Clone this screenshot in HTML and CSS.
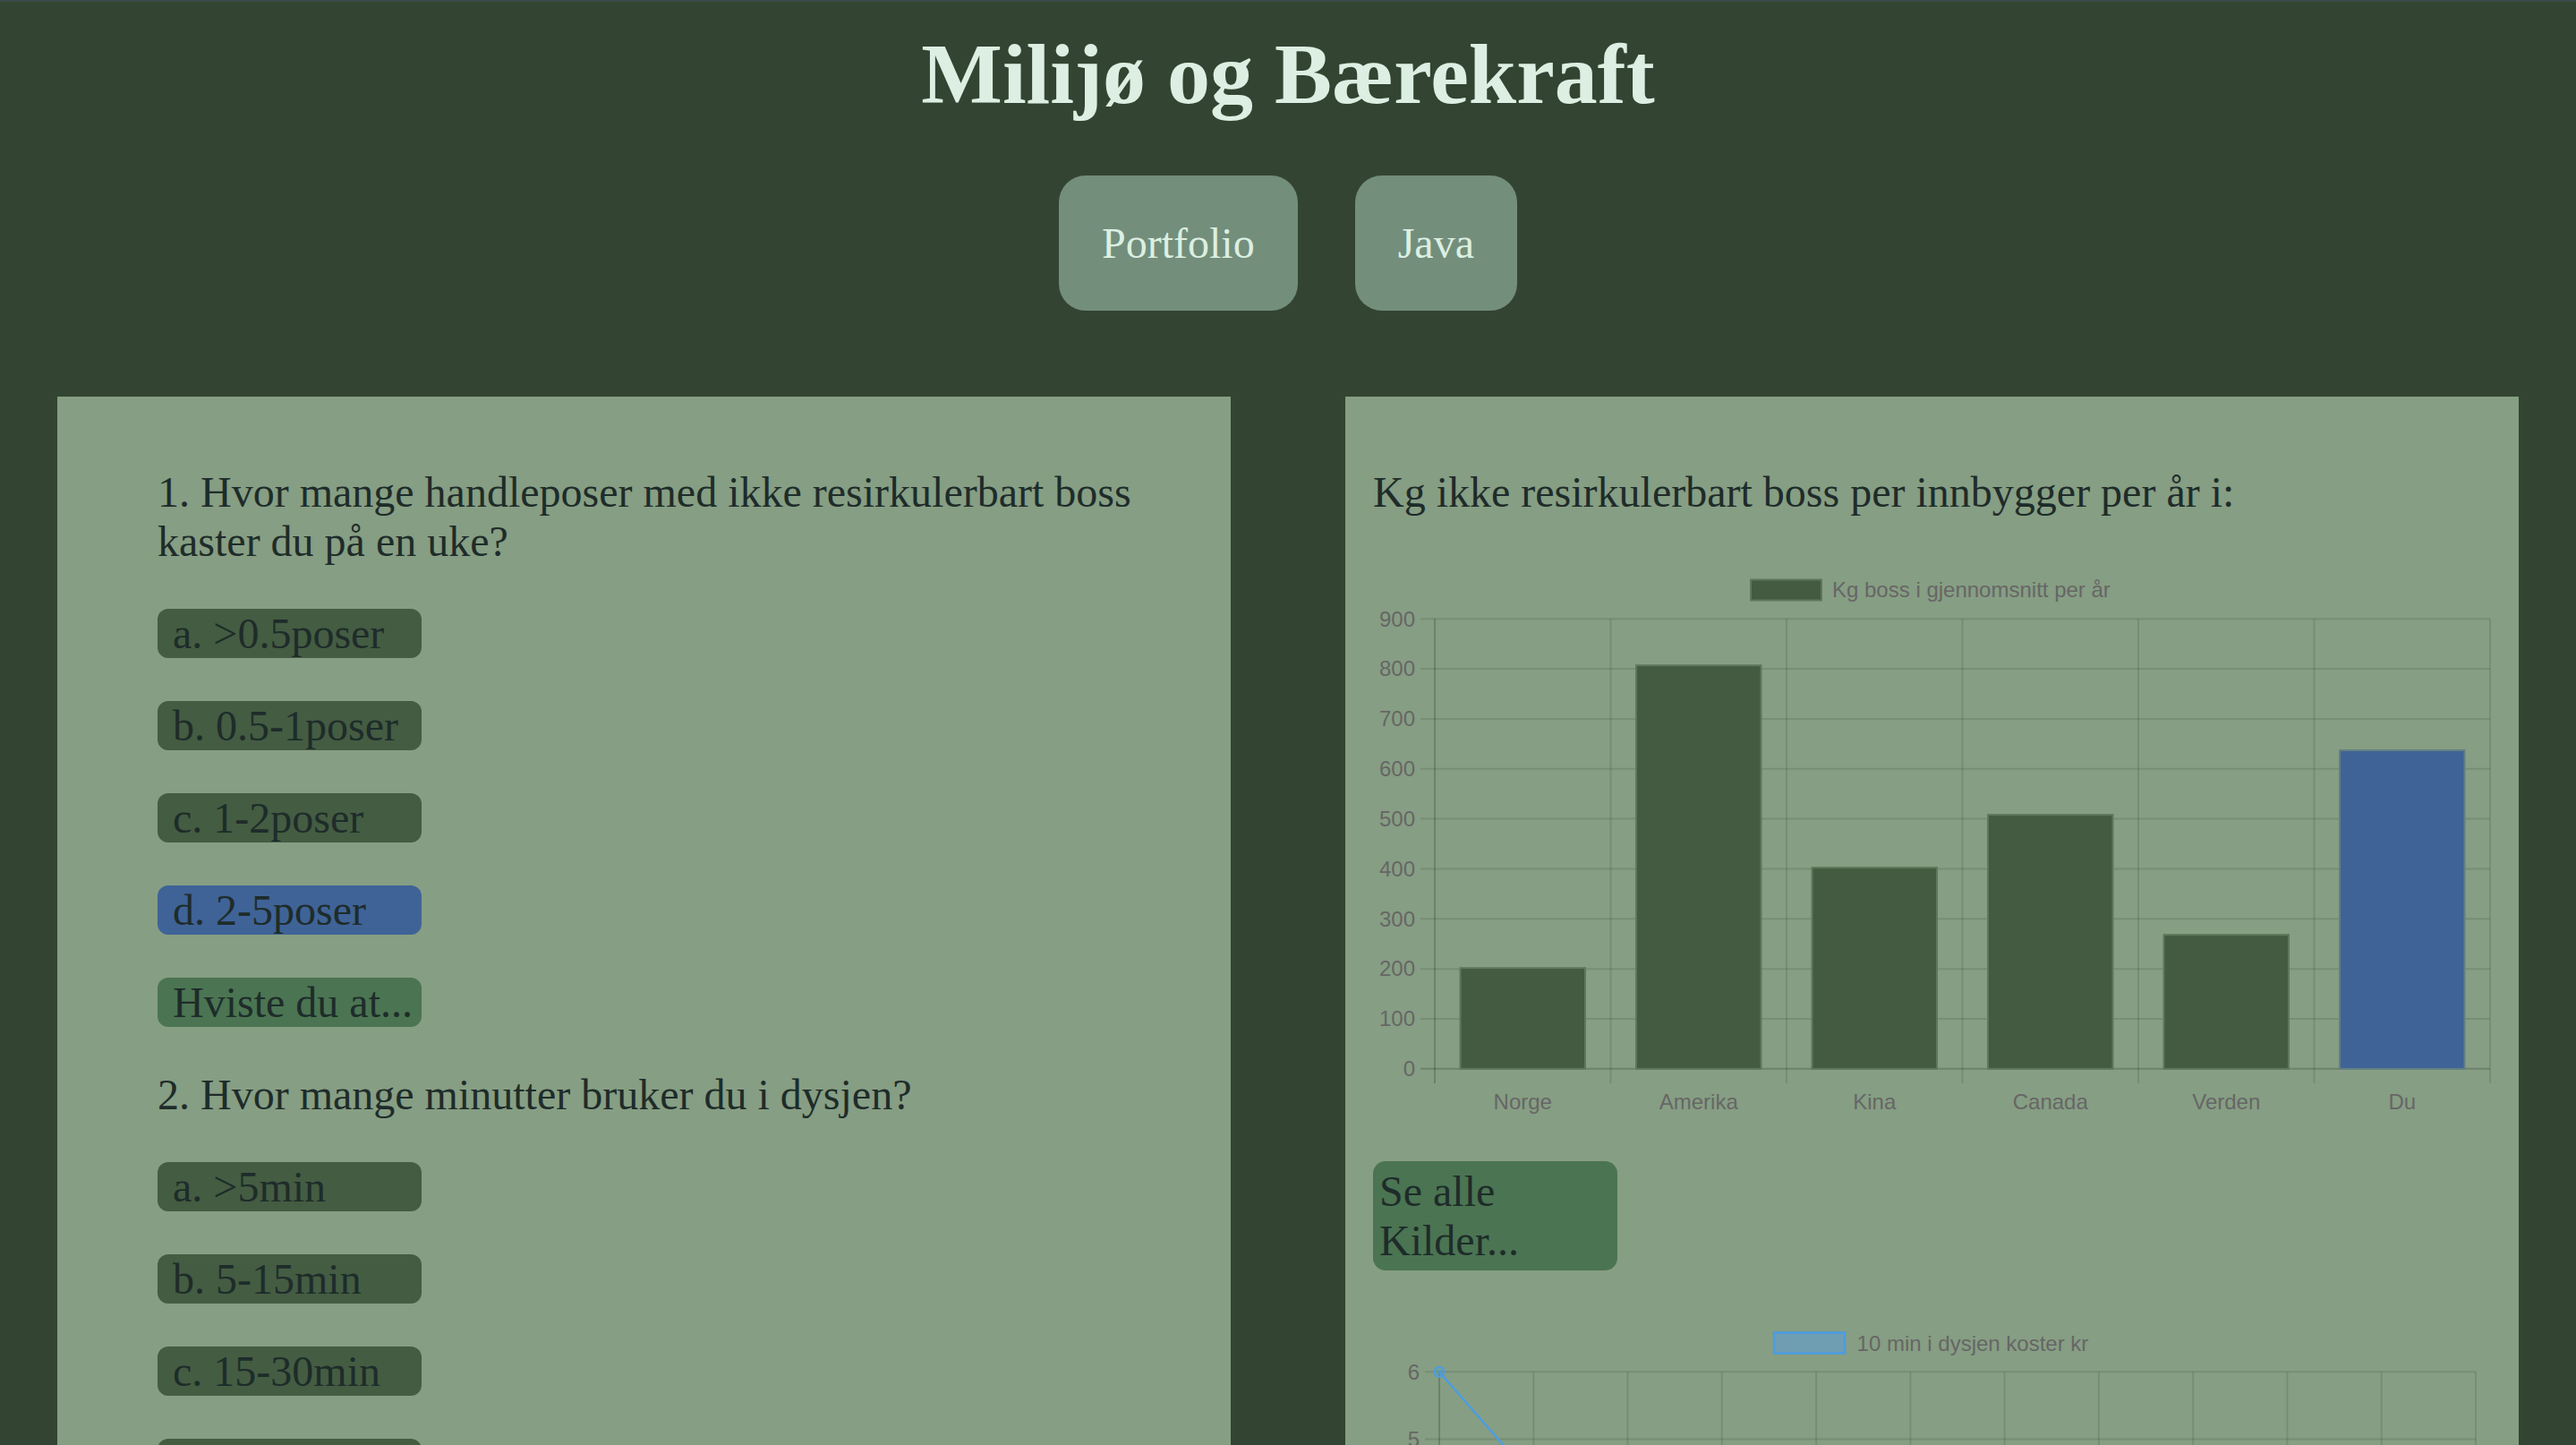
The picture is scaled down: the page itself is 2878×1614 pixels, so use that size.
FILE: index.html
```html
<!DOCTYPE html>
<html lang="no">
<head>
<meta charset="utf-8">
<title>Milijø og Bærekraft</title>
<link rel="stylesheet" href="styles.css">
</head>
<body>
<header class="header">
  <h1 class="title">Milijø og Bærekraft</h1>
  <nav class="nav">
    <a class="nav-btn" href="#">Portfolio</a>
    <a class="nav-btn" href="#">Java</a>
  </nav>
</header>
<main class="panels">
  <section class="panel panel-quiz">
    <div class="quiz">
      <p class="question">1. Hvor mange handleposer med ikke resirkulerbart boss kaster du på en uke?</p>
      <div class="opt">a. &gt;0.5poser</div>
      <div class="opt">b. 0.5-1poser</div>
      <div class="opt">c. 1-2poser</div>
      <div class="opt opt-selected">d. 2-5poser</div>
      <div class="opt opt-info">Hviste du at...</div>
      <p class="question">2. Hvor mange minutter bruker du i dysjen?</p>
      <div class="opt">a. &gt;5min</div>
      <div class="opt">b. 5-15min</div>
      <div class="opt">c. 15-30min</div>
      <div class="opt">d. 30min+</div>
      <div class="opt opt-info">Hviste du at...</div>
    </div>
  </section>
  <section class="panel panel-charts">
    <p class="question">Kg ikke resirkulerbart boss per innbygger per år i:</p>
    <svg class="chart" width="1249" height="624" viewBox="0 0 1249 624">
      <rect x="422" y="22.5" width="79" height="23" fill="#445b41" stroke="#5f775c" stroke-width="2"/>
      <text class="chart-text" x="513" y="42">Kg boss i gjennomsnitt per år</text>
      <g stroke="rgba(0,0,0,0.1)" stroke-width="2">
        <line x1="53" y1="66.2" x2="1248" y2="66.2"/>
        <line x1="53" y1="122.05" x2="1248" y2="122.05"/>
        <line x1="53" y1="177.9" x2="1248" y2="177.9"/>
        <line x1="53" y1="233.75" x2="1248" y2="233.75"/>
        <line x1="53" y1="289.6" x2="1248" y2="289.6"/>
        <line x1="53" y1="345.45" x2="1248" y2="345.45"/>
        <line x1="53" y1="401.3" x2="1248" y2="401.3"/>
        <line x1="53" y1="457.15" x2="1248" y2="457.15"/>
        <line x1="53" y1="513" x2="1248" y2="513"/>
        <line x1="265.5" y1="66.2" x2="265.5" y2="585"/>
        <line x1="462" y1="66.2" x2="462" y2="585"/>
        <line x1="658.5" y1="66.2" x2="658.5" y2="585"/>
        <line x1="855" y1="66.2" x2="855" y2="585"/>
        <line x1="1051.5" y1="66.2" x2="1051.5" y2="585"/>
        <line x1="1248" y1="66.2" x2="1248" y2="585"/>
      </g>
      <g stroke="rgba(0,0,0,0.18)" stroke-width="2">
        <line x1="53" y1="568.85" x2="1248" y2="568.85"/>
        <line x1="69" y1="66.2" x2="69" y2="585"/>
      </g>
      <g class="chart-text" text-anchor="end">
        <text x="47" y="74.5">900</text>
        <text x="47" y="130.3">800</text>
        <text x="47" y="186.2">700</text>
        <text x="47" y="242">600</text>
        <text x="47" y="297.9">500</text>
        <text x="47" y="353.7">400</text>
        <text x="47" y="409.6">300</text>
        <text x="47" y="465.4">200</text>
        <text x="47" y="521.3">100</text>
        <text x="47" y="577.1">0</text>
      </g>
      <g stroke-width="2">
        <rect x="97.5" y="456.2" width="139.5" height="112.65" fill="#445b41" stroke="#5f775c"/>
        <rect x="294" y="118.2" width="139.5" height="450.65" fill="#445b41" stroke="#5f775c"/>
        <rect x="490.5" y="344.1" width="139.5" height="224.75" fill="#445b41" stroke="#5f775c"/>
        <rect x="687" y="285.1" width="139.5" height="283.75" fill="#445b41" stroke="#5f775c"/>
        <rect x="883.5" y="419.1" width="139.5" height="149.75" fill="#445b41" stroke="#5f775c"/>
        <rect x="1080" y="213.1" width="139.5" height="355.75" fill="#3f6397" stroke="#627f86"/>
      </g>
      <g class="chart-text" text-anchor="middle">
        <text x="167.25" y="613.5">Norge</text>
        <text x="363.75" y="613.5">Amerika</text>
        <text x="560.25" y="613.5">Kina</text>
        <text x="756.75" y="613.5">Canada</text>
        <text x="953.25" y="613.5">Verden</text>
        <text x="1149.75" y="613.5">Du</text>
      </g>
    </svg>
    <a class="sources-btn" href="#">Se alle Kilder...</a>
    <svg class="chart" width="1249" height="624" viewBox="0 0 1249 624">
      <rect x="448" y="21.5" width="79" height="23" fill="#6f9db1" stroke="#4b9ce2" stroke-width="2.5"/>
      <text class="chart-text" x="540.6" y="42">10 min i dysjen koster kr</text>
      <g stroke="rgba(0,0,0,0.1)" stroke-width="2">
        <line x1="58" y1="65.3" x2="1232" y2="65.3"/>
        <line x1="58" y1="140.6" x2="1232" y2="140.6"/>
        <line x1="58" y1="215.9" x2="1232" y2="215.9"/>
        <line x1="58" y1="291.2" x2="1232" y2="291.2"/>
        <line x1="58" y1="366.5" x2="1232" y2="366.5"/>
        <line x1="58" y1="441.8" x2="1232" y2="441.8"/>
        <line x1="179.3" y1="65.3" x2="179.3" y2="533"/>
        <line x1="284.5" y1="65.3" x2="284.5" y2="533"/>
        <line x1="389.8" y1="65.3" x2="389.8" y2="533"/>
        <line x1="495.1" y1="65.3" x2="495.1" y2="533"/>
        <line x1="600.4" y1="65.3" x2="600.4" y2="533"/>
        <line x1="705.6" y1="65.3" x2="705.6" y2="533"/>
        <line x1="810.9" y1="65.3" x2="810.9" y2="533"/>
        <line x1="916.2" y1="65.3" x2="916.2" y2="533"/>
        <line x1="1021.4" y1="65.3" x2="1021.4" y2="533"/>
        <line x1="1126.7" y1="65.3" x2="1126.7" y2="533"/>
        <line x1="1232" y1="65.3" x2="1232" y2="533"/>
      </g>
      <g stroke="rgba(0,0,0,0.18)" stroke-width="2">
        <line x1="58" y1="517.1" x2="1232" y2="517.1"/>
        <line x1="74" y1="65.3" x2="74" y2="533"/>
      </g>
      <g class="chart-text" text-anchor="end">
        <text x="52" y="73.8">6</text>
        <text x="52" y="149.1">5</text>
        <text x="52" y="224.4">4</text>
        <text x="52" y="299.7">3</text>
        <text x="52" y="375">2</text>
        <text x="52" y="450.3">1</text>
        <text x="52" y="525.6">0</text>
      </g>
      <polyline fill="none" stroke="#4d9de0" stroke-width="2.5" points="74,65.3 179.3,185.8 284.5,261.1 389.8,291.2 495.1,336.4 600.4,366.5 705.6,381.6 810.9,396.6 916.2,411.7 1021.4,419.2 1126.7,426.8 1232,434.3"/>
      <g fill="rgba(54,162,235,0.3)" stroke="#4d9de0" stroke-width="2">
        <circle cx="74" cy="65.3" r="5.5"/>
        <circle cx="179.3" cy="185.8" r="5.5"/>
        <circle cx="284.5" cy="261.1" r="5.5"/>
        <circle cx="389.8" cy="291.2" r="5.5"/>
        <circle cx="495.1" cy="336.4" r="5.5"/>
        <circle cx="600.4" cy="366.5" r="5.5"/>
        <circle cx="705.6" cy="381.6" r="5.5"/>
        <circle cx="810.9" cy="396.6" r="5.5"/>
        <circle cx="916.2" cy="411.7" r="5.5"/>
        <circle cx="1021.4" cy="419.2" r="5.5"/>
        <circle cx="1126.7" cy="426.8" r="5.5"/>
        <circle cx="1232" cy="434.3" r="5.5"/>
      </g>
    </svg>
  </section>
</main>
</body>
</html>
```

FILE: styles.css
```css
html {
  background: #334532;
}
body {
  margin: 0;
  border-top: 2px solid #3a4a4a;
  background: #334532;
  font-family: "Liberation Serif", "Times New Roman", serif;
  color: #1e2c2a;
}
.header {
  display: flex;
  flex-direction: column;
  align-items: center;
  padding-top: 26px;
}
.title {
  margin: 0;
  font-size: 96px;
  line-height: 110px;
  font-weight: bold;
  color: #dcefe2;
}
.nav {
  display: flex;
  gap: 64px;
  margin-top: 58px;
}
.nav-btn {
  display: block;
  padding: 48px;
  font-size: 48px;
  line-height: 55px;
  color: #dcefe2;
  background: #738e7b;
  border-radius: 30px;
  text-decoration: none;
}
.panels {
  display: flex;
  justify-content: space-around;
  align-items: flex-start;
  margin-top: 96px;
}
.panel {
  box-sizing: border-box;
  width: 1311px;
  background: #869e83;
  padding: 79px 31px 120px 31px;
}
.quiz {
  display: flex;
  flex-direction: column;
  align-items: flex-start;
  gap: 48px;
  margin-left: 81px;
}
.question {
  margin: 0;
  font-size: 48px;
  line-height: 55px;
}
.opt {
  box-sizing: border-box;
  width: 295px;
  height: 55px;
  padding: 0 17px;
  font-size: 48px;
  line-height: 55px;
  white-space: nowrap;
  background: #445c42;
  border-radius: 12px;
}
.opt-selected {
  background: #3f6397;
}
.opt-info {
  background: #4b7452;
}
.panel-charts {
  display: flex;
  flex-direction: column;
  align-items: flex-start;
  gap: 48px;
}
.chart {
  display: block;
}
.chart-text {
  font-family: "Liberation Sans", Arial, sans-serif;
  font-size: 24px;
  fill: #666666;
}
.sources-btn {
  box-sizing: border-box;
  display: block;
  width: 273px;
  padding: 6px 7px;
  font-size: 48px;
  line-height: 55px;
  color: #1e2c2a;
  background: #4b7452;
  border-radius: 14px;
  text-decoration: none;
}
```
